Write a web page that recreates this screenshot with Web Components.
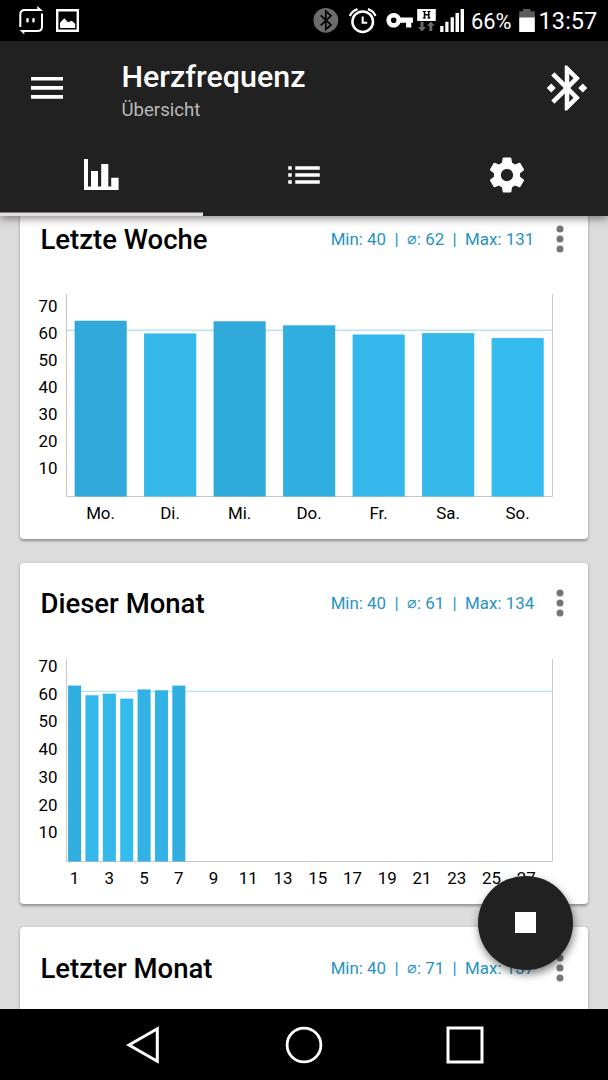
<!DOCTYPE html>
<html lang="de">
<head>
<meta charset="utf-8">
<title>Herzfrequenz</title>
<style>
  html, body { margin: 0; height: 100%; background: #000; overflow: hidden; }
  body { font-family: Roboto, "Liberation Sans", sans-serif; }
</style>
</head>
<body>
<heart-app></heart-app>

<script>
// name -> [viewBox, width, height, markup]
const ICONS = {
  robot: ['18 0 27 41', 27, 41, `
    <g fill="none" stroke="currentColor" stroke-width="2">
      <path d="M20.3 27V14.5Q20.3 10 24.8 10H39"/>
      <path d="M42 13.5V26.5Q42 31 37.5 31H23"/>
    </g>
    <path d="M37.3 6L43 11H37.3zM19.7 30H24.3V34.5z"/>
    <rect x="26.3" y="18" width="2.4" height="4.6" rx="1"/>
    <rect x="32.3" y="18" width="2.4" height="4.6" rx="1"/>`],
  picture: ['56 0 23 41', 23, 41, `
    <path fill-rule="evenodd" d="M56 9H79V32H56zM58.4 11.4V29.6H76.6V11.4z"/>
    <path d="M60 28V22.7L64.3 18.3L68 22.3L71.8 20.7L75.2 23.8V28z"/>`],
  btRound: ['312.6 0 26 41', 26, 41, `
    <circle cx="325.4" cy="20.3" r="12.4" fill="#6b6b6b"/>
    <path d="M320.3 15.3L330.6 25L325.4 29.4V11.2L330.6 15.8L320.3 25.4" fill="none" stroke="#000" stroke-width="1.7"/>`],
  alarm: ['349 0 28 41', 28, 41, `
    <g fill="none" stroke="currentColor">
      <circle cx="362.7" cy="21.7" r="10.3" stroke-width="2.5"/>
      <path d="M362.7 16.5V22.8H367.2" stroke-width="2"/>
      <path d="M349.9 16Q352 10.8 357.5 9.1M375.5 16Q373.4 10.8 367.9 9.1" stroke-width="2.2"/>
    </g>`],
  key: ['385.5 0 28 41', 28, 41, `
    <path fill-rule="evenodd" d="M393.2 13a7.3 7.3 0 0 1 6.8 4.6H412.4V22.8H410.8V27.6H405.6V22.8H400A7.3 7.3 0 1 1 393.2 13zM393.2 17.5a2.8 2.8 0 1 0 0 5.6a2.8 2.8 0 0 0 0-5.6z"/>`],
  hspa: ['416.7 0 19 41', 19, 41, `
    <rect x="416.9" y="9" width="18.6" height="12"/>
    <path d="M422.4 11.5h3.2M427 11.5h3.2M422.4 17.9h3.2M427 17.9h3.2" stroke="#000" stroke-width="1"/>
    <path d="M424.2 11v7.4M428.5 11v7.4M424 14.7h4.6" stroke="#000" stroke-width="1.5"/>
    <path fill="#6b6b6b" d="M420.2 21.7h3v5.2h2.5l-4 4.6l-4-4.6h2.5zM429 31v-5.2h-2.5l4-4.3l4 4.3H432V31z"/>`],
  signal: ['440 0 24 41', 24, 41, `
    <path d="M440.2 26H443.5V32H440.2zM445.3 21.7H448.5V32H445.3zM450.6 17.3H453.9V32H450.6zM455.5 13H459V32H455.5zM460.6 9H464V32H460.6z"/>`],
  battery: ['518.5 0 16.5 41', 16.5, 41, `
    <path fill="#5c5c5c" d="M522.5 9H530V11.3H534.3V18H518.7V11.3H522.5z"/>
    <rect x="518.7" y="17.5" width="15.6" height="14.5"/>`],
  menu: ['0 0 32 22', 32, 22, `<path d="M0 0H32V3.6H0zM0 9.1H32V12.7H0zM0 18.1H32V21.7H0z"/>`],
  bluetooth: ['0 0 24 24', 54, 54, `
    <path d="M7 12l-2-2-2 2 2 2 2-2zm10.71-4.29L12 2h-1v7.59L6.41 5 5 6.41 10.59 12 5 17.59 6.41 19 11 14.41V22h1l5.71-5.71-4.3-4.29 4.3-4.29zM13 5.83l1.88 1.88L13 9.59V5.83zm1.88 10.46L13 18.17v-3.76l1.88 1.88zM19 10l-2 2 2 2 2-2-2-2z"/>`],
  chart: ['84 160 35 32', 35, 32, `
    <path d="M84 160H88V187.4H91V172H98V187.4H101.2V165H108.3V187.4H111.2V178.7H118.6V191H84z"/>`],
  list: ['0 0 24 24', 42, 42, `
    <path d="M3 13h2v-2H3v2zm0 4h2v-2H3v2zm0-8h2V7H3v2zm4 4h14v-2H7v2zm0 4h14v-2H7v2zM7 7v2h14V7H7z"/>`],
  settings: ['0 0 24 24', 42, 42, `
    <path d="M19.43 12.98c.04-.32.07-.64.07-.98s-.03-.66-.07-.98l2.11-1.65c.19-.15.24-.42.12-.64l-2-3.46c-.12-.22-.39-.3-.61-.22l-2.49 1c-.52-.4-1.08-.73-1.69-.98l-.38-2.65C14.46 2.18 14.25 2 14 2h-4c-.25 0-.46.18-.49.42l-.38 2.65c-.61.25-1.17.59-1.69.98l-2.49-1c-.23-.09-.49 0-.61.22l-2 3.46c-.13.22-.07.49.12.64l2.11 1.65c-.04.32-.07.65-.07.98s.03.66.07.98l-2.11 1.65c-.19.15-.24.42-.12.64l2 3.46c.12.22.39.3.61.22l2.49-1c.52.4 1.08.73 1.69.98l.38 2.65c.03.24.24.42.49.42h4c.25 0 .46-.18.49-.42l.38-2.65c.61-.25 1.17-.59 1.69-.98l2.49 1c.23.09.49 0 .61-.22l2-3.46c.12-.22.07-.49-.12-.64l-2.11-1.65zM12 15.5c-1.93 0-3.5-1.57-3.5-3.5s1.57-3.5 3.5-3.5 3.5 1.57 3.5 3.5-1.57 3.5-3.5 3.5z"/>`],
  more: ['0 0 8 28', 8, 28, `<circle cx="4" cy="3.9" r="3.5"/><circle cx="4" cy="14" r="3.5"/><circle cx="4" cy="24.1" r="3.5"/>`],
  stop: ['0 0 21 21', 21, 21, `<path d="M0 0H21V21H0z"/>`],
  back: ['0 0 38 38', 38, 38, `<path d="M5 19L33.3 2.8V35.2z" fill="none" stroke="currentColor" stroke-width="3"/>`],
  home: ['0 0 38 38', 38, 38, `<circle cx="19" cy="19" r="16.9" fill="none" stroke="currentColor" stroke-width="2.8"/>`],
  recent: ['0 0 38 38', 38, 38, `<rect x="2" y="2" width="34" height="34" fill="none" stroke="currentColor" stroke-width="3"/>`]
};

class UiIcon extends HTMLElement {
  constructor() {
    super();
    this.attachShadow({ mode: 'open' });
  }

  connectedCallback() {
    const [box, w, h, markup] = ICONS[this.getAttribute('name')];
    this.shadowRoot.innerHTML = `
      <style>
        :host { display: block; flex: none; }
        svg { display: block; fill: currentColor; }
      </style>
      <svg viewBox="${box}" width="${w}" height="${h}">${markup}</svg>
    `;
  }
}

class StatusBar extends HTMLElement {
  constructor() {
    super();
    this.attachShadow({ mode: 'open' });
    this.shadowRoot.innerHTML = `
      <style>
        :host {
          display: flex;
          height: 40.5px;
          box-sizing: border-box;
          padding: 0 11.4px 0 18px;
          background: #000;
          color: #fff;
        }
        .left { display: flex; gap: 11px; flex: 1; }
        .right { display: flex; }
        span { line-height: 43px; height: 40px; white-space: nowrap; }
        .percent { width: 47.5px; font-size: 21.8px; }
        .time { width: 58px; font-size: 23.6px; }
      </style>
      <div class="left">
        <ui-icon name="robot"></ui-icon>
        <ui-icon name="picture"></ui-icon>
      </div>
      <div class="right">
        <ui-icon name="btRound" style="margin-right:10.4px"></ui-icon>
        <ui-icon name="alarm" style="margin-right:8.5px"></ui-icon>
        <ui-icon name="key" style="margin-right:3.2px"></ui-icon>
        <ui-icon name="hspa" style="margin-right:4.3px"></ui-icon>
        <ui-icon name="signal" style="margin-right:7px"></ui-icon>
        <span class="percent">66%</span>
        <ui-icon name="battery" style="margin-right:3.5px"></ui-icon>
        <span class="time">13:57</span>
      </div>
    `;
  }
}

class AppHeader extends HTMLElement {
  constructor() {
    super();
    this.attachShadow({ mode: 'open' });
    this.shadowRoot.innerHTML = `
      <style>
        :host {
          display: block;
          position: relative;
          z-index: 1;
          height: 175.5px;
          background: #212121;
          color: #fff;
          box-shadow: 0 2px 9px rgba(0, 0, 0, .5);
        }
        .toolbar {
          display: flex;
          align-items: center;
          height: 94px;
          padding: 0 13.6px 0 31px;
          box-sizing: border-box;
        }
        .titles { flex: 1; margin-left: 58.5px; padding-top: 6px; }
        .title { font-size: 30.4px; font-weight: 500; line-height: 36px; }
        .subtitle { margin: 4px 0 2px; font-size: 18.6px; line-height: 22px; color: #b9b9b9; }
        nav { display: grid; grid-template-columns: repeat(3, 1fr); height: 81.5px; }
        nav div { display: grid; place-items: center; }
        .active { box-shadow: inset 0 -3.5px #e2dcdf; }
      </style>
      <div class="toolbar">
        <ui-icon name="menu"></ui-icon>
        <div class="titles">
          <div class="title"><slot></slot></div>
          <div class="subtitle"><slot name="subtitle"></slot></div>
        </div>
        <ui-icon name="bluetooth"></ui-icon>
      </div>
      <nav>
        <div class="active"><ui-icon name="chart"></ui-icon></div>
        <div><ui-icon name="list"></ui-icon></div>
        <div><ui-icon name="settings"></ui-icon></div>
      </nav>
    `;
  }
}

class BarChart extends HTMLElement {
  constructor() {
    super();
    this.attachShadow({ mode: 'open' });
  }

  connectedCallback() {
    this.render();
  }

  // low values are bright, high values get darker
  barColor(v) {
    const t = (v - 58.7) / (65.1 - 58.7);
    const mix = (a, b) => Math.round(a + (b - a) * t);
    return `rgb(${mix(53, 48)}, ${mix(188, 169)}, ${mix(239, 218)})`;
  }

  render() {
    const values = JSON.parse(this.getAttribute('values'));
    const labels = JSON.parse(this.getAttribute('labels'));
    const slots = Number(this.getAttribute('slots'));
    const scale = Number(this.getAttribute('scale')); // px per unit
    const avg = Number(this.getAttribute('avg'));
    const left = 46;
    const right = 532.5;
    const top = 16;
    const bottom = 218.5;
    const slot = (right - left) / slots;
    const step = slots / labels.length;

    const avgY = bottom - avg * scale;
    let svg = `<path d="M${left} ${avgY}H${right}" stroke="#b8e2f5" stroke-width="1.4"/>`;
    svg += `<path d="M${left + .5} ${top}V${bottom}H${right}V${top}" fill="none" stroke="#c8c8c8"/>`;
    values.forEach((v, i) => {
      const x = left - .1 + slot * (i + .125);
      const h = v * scale;
      svg += `<rect x="${x}" y="${bottom - h}" width="${slot * .75}" height="${h}" fill="${this.barColor(v)}"/>`;
    });
    for (let n = 10; n <= 70; n += 10) {
      svg += `<text x="37.6" y="${bottom - n * scale + 4.7}" text-anchor="end">${n}</text>`;
    }
    labels.forEach((label, i) => {
      svg += `<text x="${left - .2 + slot * (i * step + .5)}" y="${bottom + 22.4}" text-anchor="middle">${label}</text>`;
    });

    this.shadowRoot.innerHTML = `
      <style>
        :host { display: block; }
        svg { display: block; }
        text { font-size: 16.9px; fill: #000; }
      </style>
      <svg width="568" height="260" viewBox="0 0 568 260">${svg}</svg>
    `;
  }
}

class StatCard extends HTMLElement {
  constructor() {
    super();
    this.attachShadow({ mode: 'open' });
  }

  connectedCallback() {
    this.shadowRoot.innerHTML = `
      <style>
        :host {
          display: block;
          flex: none;
          height: 341px;
          background: #fff;
          border-radius: 4px;
          box-shadow: 0 1.5px 3px rgba(0, 0, 0, .35);
        }
        header {
          display: flex;
          align-items: center;
          height: 80px;
          padding: 1px 23.7px 0 20.5px;
          box-sizing: border-box;
        }
        h2 { flex: 1; margin: 2px 0 0; font-size: 27.5px; font-weight: 500; line-height: 32px; color: #000; }
        .stats { width: 225.7px; font-size: 16.9px; line-height: 20px; color: #2793c2; white-space: pre; }
        .avg {
          display: inline-block;
          width: 10px;
          font-size: 15.5px;
          line-height: 16px;
          vertical-align: 1px;
        }
        ui-icon { color: #757575; }
      </style>
      <header>
        <h2>${this.getAttribute('heading')}</h2>
        <div class="stats">Min: ${this.getAttribute('min')}  |  <span class="avg">⌀</span>: ${this.getAttribute('mean')}  |  Max: ${this.getAttribute('max')}</div>
        <ui-icon name="more"></ui-icon>
      </header>
      <slot></slot>
    `;
  }
}

class FabButton extends HTMLElement {
  constructor() {
    super();
    this.attachShadow({ mode: 'open' });
    this.shadowRoot.innerHTML = `
      <style>
        :host {
          display: grid;
          place-items: center;
          width: 94.5px;
          height: 94.5px;
          border-radius: 50%;
          background: #212121;
          color: #fff;
          box-shadow: 1px 4px 9px rgba(0, 0, 0, .5);
        }
      </style>
      <ui-icon name="stop"></ui-icon>
    `;
  }
}

class NavBar extends HTMLElement {
  constructor() {
    super();
    this.attachShadow({ mode: 'open' });
    this.shadowRoot.innerHTML = `
      <style>
        :host {
          display: flex;
          justify-content: center;
          align-items: center;
          gap: 122.7px;
          height: 71px;
          background: #000;
          color: #fff;
        }
      </style>
      <ui-icon name="back"></ui-icon>
      <ui-icon name="home"></ui-icon>
      <ui-icon name="recent"></ui-icon>
    `;
  }
}

class HeartApp extends HTMLElement {
  constructor() {
    super();
    this.attachShadow({ mode: 'open' });
    this.shadowRoot.innerHTML = `
      <style>
        :host { display: flex; flex-direction: column; width: 608px; height: 1080px; }
        main { position: relative; flex: 1; min-height: 0; overflow: hidden; background: #dcdcdc; }
        /* list is scrolled a little, first card slides under the header */
        .cards { display: flex; flex-direction: column; gap: 23.5px; margin: -18px 20px 0; }
        fab-button { position: absolute; right: 35.5px; bottom: 39px; }
      </style>
      <status-bar></status-bar>
      <app-header>Herzfrequenz<span slot="subtitle">Übersicht</span></app-header>
      <main>
        <div class="cards">
          <stat-card heading="Letzte Woche" min="40" mean="62" max="131">
            <bar-chart slots="7" scale="2.7" avg="61.6"
              values="[65.1, 60.4, 64.9, 63.4, 60, 60.5, 58.7]"
              labels='["Mo.", "Di.", "Mi.", "Do.", "Fr.", "Sa.", "So."]'></bar-chart>
          </stat-card>
          <stat-card heading="Dieser Monat" min="40" mean="61" max="134">
            <bar-chart slots="28" scale="2.775" avg="61.3"
              values="[63.4, 59.9, 60.5, 58.7, 62, 61.7, 63.4]"
              labels="[1, 3, 5, 7, 9, 11, 13, 15, 17, 19, 21, 23, 25, 27]"></bar-chart>
          </stat-card>
          <stat-card heading="Letzter Monat" min="40" mean="71" max="137"></stat-card>
        </div>
        <fab-button></fab-button>
      </main>
      <nav-bar></nav-bar>
    `;
  }
}

customElements.define('ui-icon', UiIcon);
customElements.define('status-bar', StatusBar);
customElements.define('app-header', AppHeader);
customElements.define('bar-chart', BarChart);
customElements.define('stat-card', StatCard);
customElements.define('fab-button', FabButton);
customElements.define('nav-bar', NavBar);
customElements.define('heart-app', HeartApp);
</script>
</body>
</html>
